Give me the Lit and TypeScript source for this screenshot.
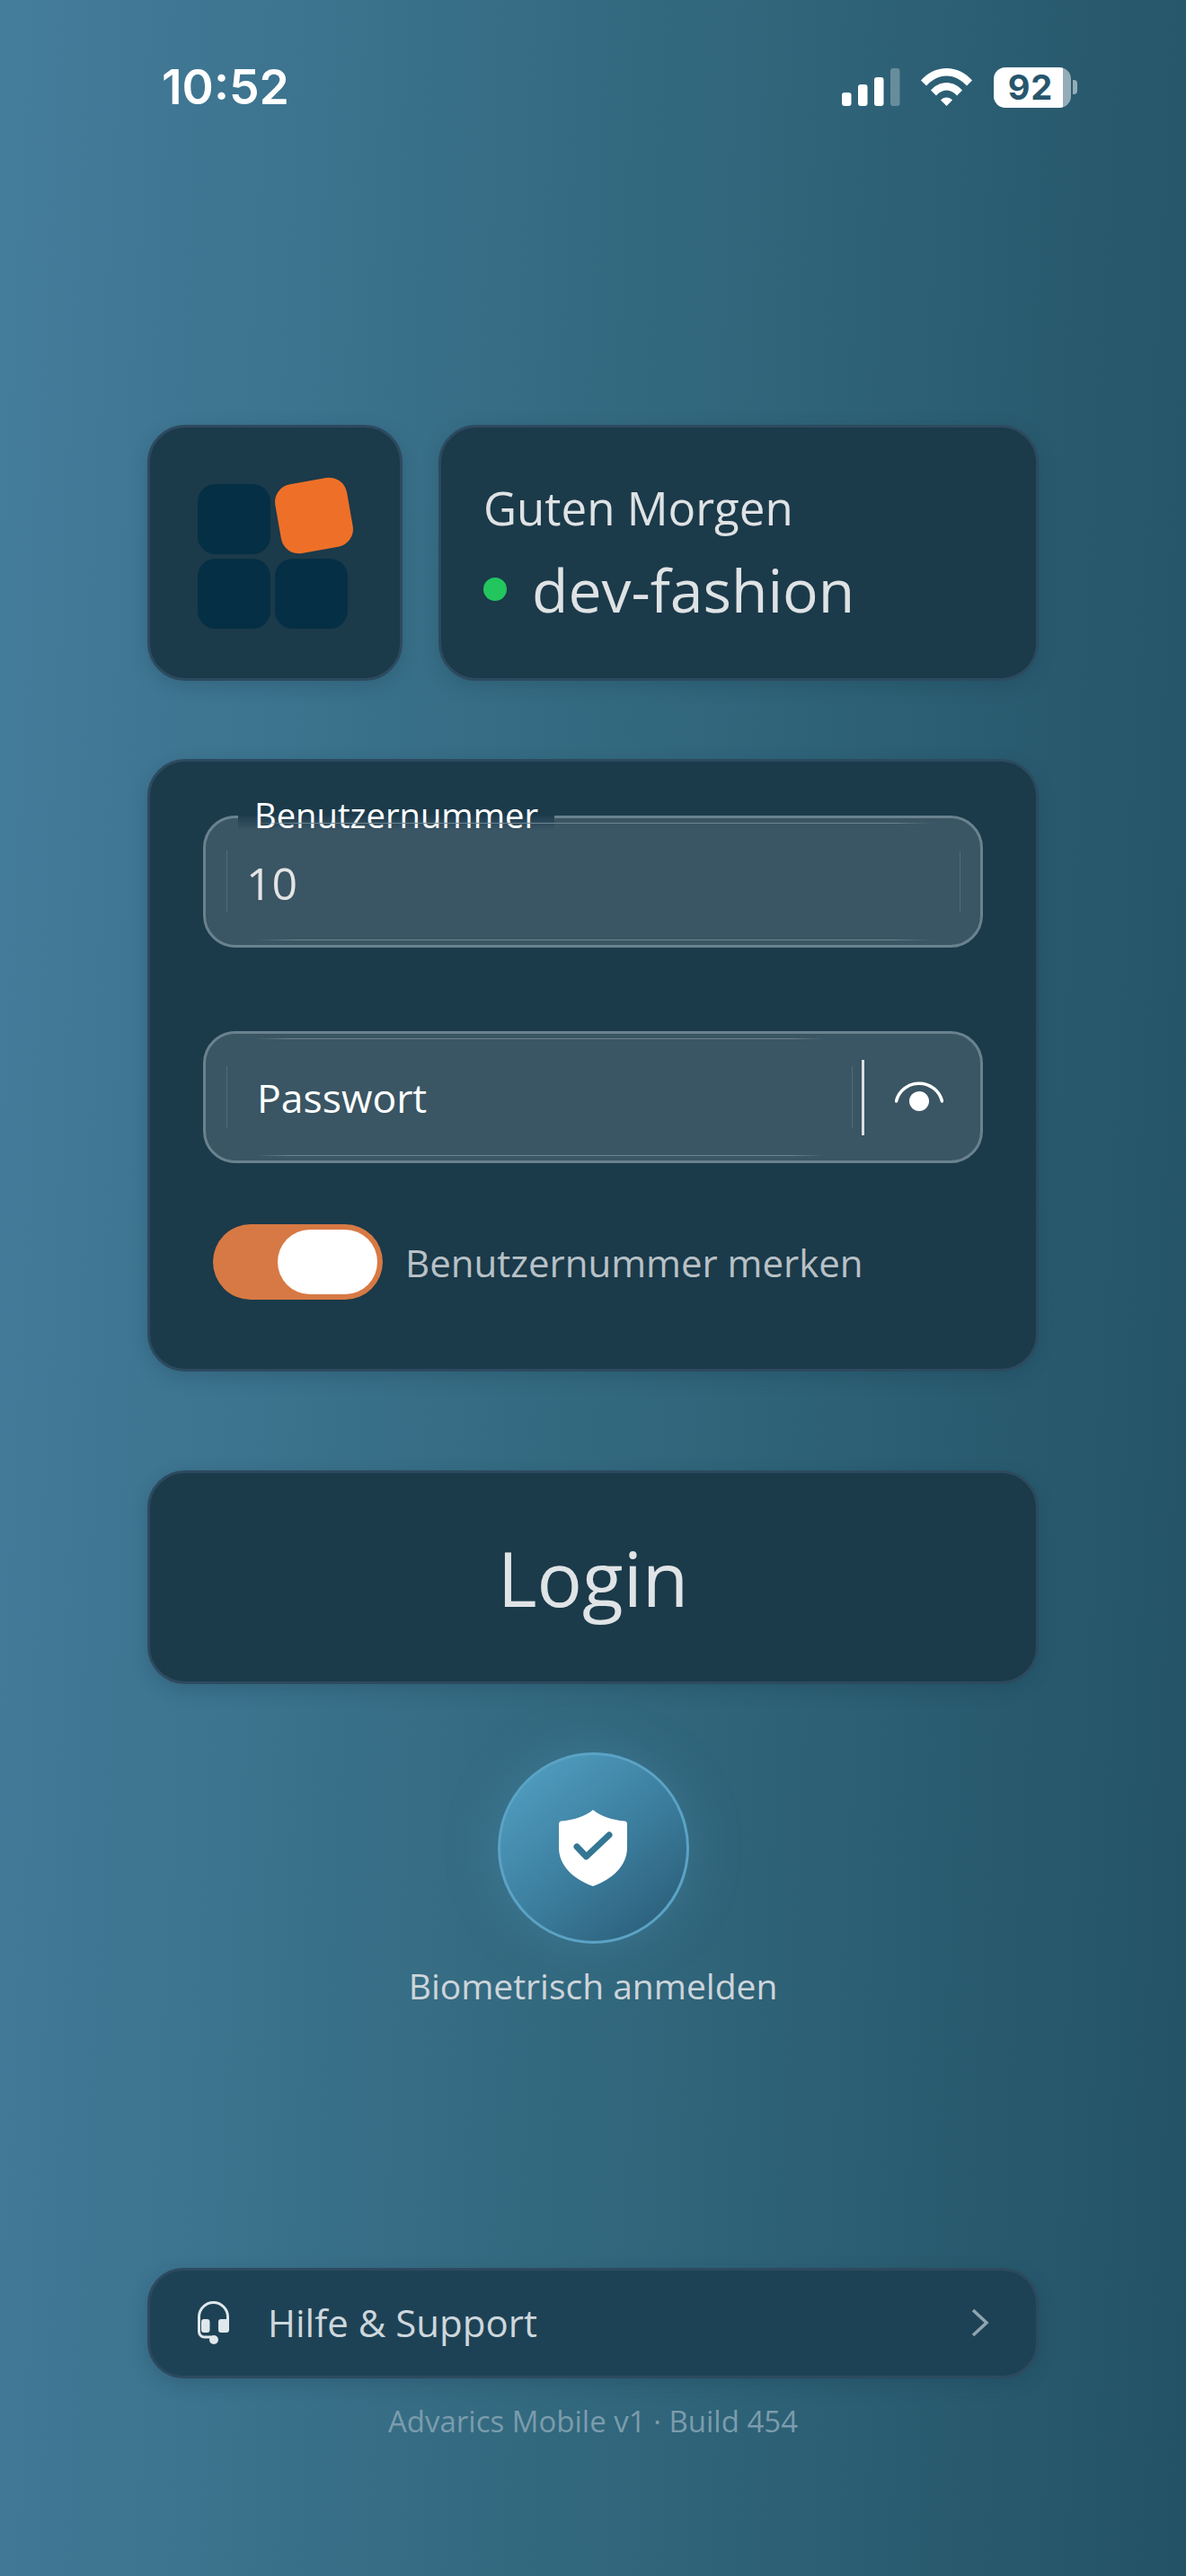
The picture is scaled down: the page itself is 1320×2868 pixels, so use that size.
import { LitElement, html, css } from 'lit';
import { customElement } from 'lit/decorators.js';

@customElement('app-root')
export class AppRoot extends LitElement {
  static styles = css`
    :host {
      display: block;
      font-family: "Open Sans", "Noto Sans", sans-serif;
    }
    * {
      box-sizing: border-box;
    }
    .page {
      height: 2868px;
      overflow: hidden;
      background: linear-gradient(93deg, #447c9b 0%, #33697f 50%, #235266 100%);
      display: flex;
      flex-direction: column;
    }

    /* status bar */
    .status {
      display: flex;
      align-items: center;
      justify-content: space-between;
      height: 46px;
      margin-top: 74px;
      padding: 0 128px 0 180px;
      color: #fff;
    }
    .time {
      font-family: Inter, sans-serif;
      font-weight: 600;
      font-size: 53.5px;
      line-height: 46px;
    }
    .status-icons {
      display: flex;
      align-items: center;
    }
    .signal {
      width: 65px;
      height: 42px;
      margin-right: 23px;
    }
    .wifi {
      width: 57px;
      height: 42px;
      margin-right: 24px;
    }
    .battery {
      position: relative;
      width: 86px;
      height: 45px;
      border-radius: 13px;
      background: linear-gradient(90deg, #fff 90%, rgba(255, 255, 255, 0.5) 90%);
      display: flex;
      align-items: center;
      justify-content: center;
      padding-right: 4px;
      font-family: Inter, sans-serif;
      font-weight: 700;
      font-size: 38px;
      letter-spacing: 1px;
      color: #27566d;
    }
    .battery::after {
      content: '';
      position: absolute;
      right: -7px;
      top: 14px;
      width: 5px;
      height: 16px;
      border-radius: 0 4px 4px 0;
      background: rgba(255, 255, 255, 0.5);
    }

    .content {
      display: flex;
      flex-direction: column;
      padding: 0 164px;
    }
    .card {
      background: #1b3a4a;
      border: 3px solid #2d4a5f;
      border-radius: 42px;
      box-shadow: 0 6px 20px rgba(20, 50, 70, 0.22);
    }

    /* top row */
    .top-row {
      display: flex;
      gap: 40px;
      height: 285px;
      margin-top: 353px;
    }
    .logo-card {
      width: 284px;
      padding: 63px 0 0 53px;
    }
    .logo {
      display: grid;
      grid-template-columns: 81px 81px;
      grid-auto-rows: 78px;
      gap: 5px;
    }
    .tile {
      background: #052f44;
      border-radius: 20px;
    }
    .tile.accent {
      background: #ee7028;
      transform: translate(3px, -4px) rotate(-10deg);
    }
    .info-card {
      flex: 1;
      display: flex;
      flex-direction: column;
      justify-content: center;
      padding: 1px 0 0 47px;
      color: #dfe2e4;
    }
    .greeting {
      font-size: 51px;
      line-height: 68px;
    }
    .tenant {
      display: flex;
      align-items: center;
      gap: 28px;
      margin-top: 12px;
      font-size: 66px;
      line-height: 90px;
    }
    .dot {
      width: 26px;
      height: 26px;
      border-radius: 50%;
      background: #22c55e;
    }

    /* form card */
    .form-card {
      margin-top: 87px;
      height: 682px;
      padding: 60px 59px 0 59px;
    }
    .field {
      position: relative;
      display: flex;
      align-items: stretch;
      height: 147px;
      background: #3a5564;
      border: 3px solid #6a828f;
      border-radius: 36px;
    }
    .field + .field {
      margin-top: 93px;
    }
    .field-label {
      position: absolute;
      left: 36px;
      top: -20px;
      height: 33px;
      padding: 0 18px;
      color: #fff;
      font-size: 38.2px;
      line-height: 32px;
      background: linear-gradient(#1b3a4a 0 17px, #1f3d4f 17px, #3a5564 100%);
    }
    .input {
      position: relative;
      flex: 1;
      display: flex;
      align-items: center;
      font-size: 44.5px;
      color: #fff;
      padding-left: 57px;
    }
    .input.value {
      padding: 2px 0 0 45px;
      font-size: 50px;
      color: #e4e4e4;
    }
    /* glass hairlines inside the input */
    .input::before {
      content: '';
      position: absolute;
      left: 56px;
      right: 42px;
      top: 5px;
      bottom: 5px;
      border-top: 1px solid transparent;
      border-bottom: 1px solid transparent;
      border-image: linear-gradient(90deg, transparent, #6d8592 6%, #6d8592 94%, transparent) 1;
      border-left: 0;
      border-right: 0;
    }
    .input::after {
      content: '';
      position: absolute;
      left: 23px;
      right: 10px;
      top: 36px;
      bottom: 36px;
      border-left: 1px solid #526b79;
      border-right: 1px solid #526b79;
    }
    .input.value::before {
      right: 54px;
    }
    .input.value::after {
      right: 22px;
    }
    .divider {
      width: 3px;
      height: 84px;
      margin-top: 29px;
      background: #dcdfe1;
    }
    .eye {
      width: 129px;
      padding-right: 7px;
      display: flex;
      align-items: center;
      justify-content: center;
    }
    .eye svg {
      width: 54px;
      height: 36px;
    }

    .remember {
      display: flex;
      align-items: center;
      gap: 25px;
      margin: 68px 0 0 11px;
      color: #b8c1c6;
      font-size: 42px;
    }
    .toggle {
      display: flex;
      align-items: center;
      justify-content: flex-end;
      width: 189px;
      height: 84px;
      padding-right: 6px;
      border-radius: 42px;
      background: #d77944;
    }
    .knob {
      width: 111px;
      height: 72px;
      border-radius: 36px;
      background: #fff;
    }

    /* login */
    .login {
      margin-top: 110px;
      height: 238px;
      display: flex;
      align-items: center;
      justify-content: center;
      font-size: 84px;
      color: #e0e4e6;
    }

    /* biometric */
    .bio {
      margin-top: 76px;
      display: flex;
      flex-direction: column;
      align-items: center;
    }
    .bio-circle {
      width: 213px;
      height: 213px;
      border-radius: 50%;
      border: 3px solid #5ba3c5;
      background: linear-gradient(140deg, #4f9cbf 10%, #3b7c9c 55%, #2c607b 90%);
      box-shadow: 0 0 60px rgba(95, 170, 210, 0.25);
      display: flex;
      align-items: center;
      justify-content: center;
    }
    .bio-circle svg {
      width: 76px;
      height: 85px;
    }
    .bio-label {
      margin-top: 22px;
      font-size: 39px;
      line-height: 50px;
      color: #cdd5da;
    }

    /* help */
    .help {
      margin-top: 289px;
      height: 123px;
      display: flex;
      align-items: center;
      padding: 0 52px 2px 53px;
      border-radius: 40px;
      background: #1e4255;
      color: #cdd7dc;
      font-size: 42px;
    }
    .help .headset {
      width: 35px;
      height: 48px;
      margin-right: 43px;
    }
    .help .label {
      flex: 1;
    }
    .help .chevron {
      width: 20px;
      height: 32px;
    }
    .version {
      margin-top: 25px;
      text-align: center;
      font-size: 33px;
      line-height: 46px;
      color: #7b9cac;
    }
  `;

  render() {
    return html`
      <div class="page">
        <div class="status">
          <span class="time">10:52</span>
          <div class="status-icons">
            <svg class="signal" viewBox="0 0 65 42" fill="#fff">
              <rect x="0" y="27" width="10.5" height="15" rx="3"></rect>
              <rect x="18" y="18" width="10.5" height="24" rx="3"></rect>
              <rect x="36" y="10" width="10.5" height="32" rx="3"></rect>
              <rect x="54" y="0" width="10.5" height="42" rx="3" opacity="0.28"></rect>
            </svg>
            <svg class="wifi" viewBox="0 0 57 42" fill="#fff">
              <path d="M0 13.5C7.5 5 17.6 0 28.5 0S49.5 5 57 13.5L51 19.5C45 13 37.2 8.5 28.5 8.5S12 13 6 19.5Z"></path>
              <path d="M11 24.5C15.5 19.5 21.5 16 28.5 16S41.5 19.5 46 24.5L40 30.5C37 27 33 24.5 28.5 24.5S20 27 17 30.5Z"></path>
              <path d="M22 35.5C23.7 33.6 26 32.5 28.5 32.5S33.3 33.6 35 35.5L28.5 42Z"></path>
            </svg>
            <div class="battery">92</div>
          </div>
        </div>

        <div class="content">
          <div class="top-row">
            <div class="card logo-card">
              <div class="logo">
                <div class="tile"></div>
                <div class="tile accent"></div>
                <div class="tile"></div>
                <div class="tile"></div>
              </div>
            </div>
            <div class="card info-card">
              <div class="greeting">Guten Morgen</div>
              <div class="tenant"><span class="dot"></span>dev-fashion</div>
            </div>
          </div>

          <div class="card form-card">
            <div class="field">
              <span class="field-label">Benutzernummer</span>
              <div class="input value">10</div>
            </div>
            <div class="field">
              <div class="input">Passwort</div>
              <div class="divider"></div>
              <div class="eye">
                <svg viewBox="0 0 54 36" fill="none">
                  <path d="M1.5 22A26.3 26.3 0 0 1 52.5 22" stroke="#fff" stroke-width="3.5" stroke-linecap="round"></path>
                  <circle cx="27" cy="22" r="11" fill="#fff"></circle>
                </svg>
              </div>
            </div>
            <div class="remember">
              <div class="toggle"><div class="knob"></div></div>
              <span>Benutzernummer merken</span>
            </div>
          </div>

          <div class="card login">Login</div>

          <div class="bio">
            <div class="bio-circle">
              <svg viewBox="0 0 76 85">
                <path fill="#fff" d="M38 0C46 7 60 11.5 73 12.5C75 12.7 76 14 76 16V42C76 62 60 77 38 85C16 77 0 62 0 42V16C0 14 1 12.7 3 12.5C16 11.5 30 7 38 0Z"></path>
                <path fill="none" stroke="#337793" stroke-width="7" stroke-linecap="round" stroke-linejoin="round" d="M20 41L30.5 52L56 28"></path>
              </svg>
            </div>
            <div class="bio-label">Biometrisch anmelden</div>
          </div>

          <div class="card help">
            <svg class="headset" viewBox="0 0 35 48" fill="none">
              <path d="M1.5 33V17.5a16 16 0 0 1 32 0V26" stroke="#dfe8ec" stroke-width="3"></path>
              <rect x="4" y="20" width="9.5" height="15" rx="3" fill="#dfe8ec"></rect>
              <rect x="23" y="20" width="12" height="15" rx="3" fill="#dfe8ec"></rect>
              <path d="M1.5 32v2a6 6 0 0 0 6 6h9" stroke="#dfe8ec" stroke-width="3"></path>
              <circle cx="18" cy="43" r="5" fill="#dfe8ec"></circle>
            </svg>
            <span class="label">Hilfe &amp; Support</span>
            <svg class="chevron" viewBox="0 0 20 32" fill="none">
              <path d="M2 2L17 16L2 30" stroke="#8fa5b0" stroke-width="3.5"></path>
            </svg>
          </div>
          <div class="version">Advarics Mobile v1 · Build 454</div>
        </div>
      </div>
    `;
  }
}
